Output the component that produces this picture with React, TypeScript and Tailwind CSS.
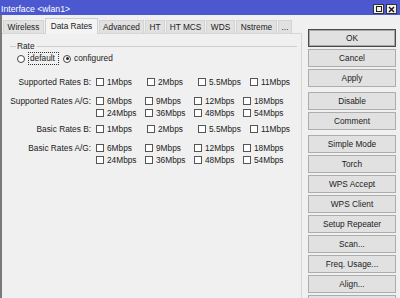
import React from "react";

const tabs = [
  { name: "Wireless", w: "w-[41px]" },
  { name: "Data Rates", w: "w-[53px]", active: true },
  { name: "Advanced", w: "w-[45px]" },
  { name: "HT", w: "w-[20px]" },
  { name: "HT MCS", w: "w-[39px]" },
  { name: "WDS", w: "w-[29px]" },
  { name: "Nstreme", w: "w-[41px]" },
  { name: "...", w: "w-[14px]" },
];

const rateB = ["1Mbps", "2Mbps", "5.5Mbps", "11Mbps"];
const rateAG = [
  ["6Mbps", "9Mbps", "12Mbps", "18Mbps"],
  ["24Mbps", "36Mbps", "48Mbps", "54Mbps"],
];

const buttonGroups = [
  ["OK", "Cancel", "Apply"],
  ["Disable", "Comment"],
  ["Simple Mode", "Torch", "WPS Accept", "WPS Client", "Setup Repeater", "Scan...", "Freq. Usage...", "Align...", ""],
];

function Check({ label }: { label: string }) {
  return (
    <div className="flex items-center h-[12px]">
      <span className="w-[8px] h-[8px] bg-white border border-[#555] shrink-0" />
      <span className="ml-[3px] whitespace-nowrap">{label}</span>
    </div>
  );
}

function Radio({ checked }: { checked?: boolean }) {
  return (
    <span className="w-[8px] h-[8px] rounded-full bg-white border border-[#444] flex items-center justify-center shrink-0">
      {checked && <span className="w-[3px] h-[3px] rounded-full bg-[#222]" />}
    </span>
  );
}

function RateB({ label, className }: { label: string; className: string }) {
  return (
    <div className={`flex ${className}`}>
      <div className="w-[89px] text-right h-[12px] leading-[12px] whitespace-nowrap">{label}</div>
      <div className="ml-[5px] grid grid-cols-[51px_51px_52px_auto]">
        {rateB.map((r) => (
          <Check key={r} label={r} />
        ))}
      </div>
    </div>
  );
}

function RateAG({ label, className }: { label: string; className: string }) {
  return (
    <div className={`flex ${className}`}>
      <div className="w-[89px] text-right h-[12px] leading-[12px] whitespace-nowrap">{label}</div>
      <div className="ml-[5px] flex flex-col">
        {rateAG.map((row, i) => (
          <div key={i} className="grid grid-cols-[49px_49px_49px_auto]">
            {row.map((r) => (
              <Check key={r} label={r} />
            ))}
          </div>
        ))}
      </div>
    </div>
  );
}

export default function App() {
  return (
    <div className="w-[400px] h-[298px] overflow-hidden bg-[#f0f0f0] flex flex-col font-['Liberation_Sans',Arial,sans-serif] text-[8.3px] text-[#1b1b1b]">
      {/* Title bar */}
      <div className="h-[15px] shrink-0 bg-[#4b58cf] flex items-end pb-[1px] pl-[1px] pr-[3px]">
        <span className="text-white text-[8.7px] leading-[10px]">Interface &lt;wlan1&gt;</span>
        <div className="ml-auto flex gap-[2px]">
          <span className="w-[11px] h-[10px] bg-[#f0f0f0] border border-[#333] flex items-center justify-center">
            <span className="w-[6px] h-[6px] border border-[#222]" />
          </span>
          <span className="w-[11px] h-[10px] bg-[#f0f0f0] border border-[#333] flex items-center justify-center">
            <svg width="7" height="7" viewBox="0 0 7 7">
              <path d="M1 1L6 6M6 1L1 6" stroke="#111" strokeWidth="1.4" />
            </svg>
          </span>
        </div>
      </div>

      <div className="flex flex-1 min-h-0">
        {/* Left: tabs + panel */}
        <div className="w-[302px] border-l-2 border-[#7a7a7a] flex flex-col pt-[3px]">
          <div className="flex items-end h-[15px] pl-[1px] gap-[1px]">
            {tabs.map((t) =>
              t.active ? (
                <div
                  key={t.name}
                  className={`${t.w} h-[16px] -mb-px z-10 bg-[#f4f4f4] border border-b-0 border-[#cfcfcf] flex items-center justify-center`}
                >
                  {t.name}
                </div>
              ) : (
                <div
                  key={t.name}
                  className={`${t.w} h-[13px] bg-[#e1e1e1] border border-b-0 border-[#d4d4d4] flex items-center justify-center text-[#222]`}
                >
                  {t.name}
                </div>
              )
            )}
          </div>

          <div className="flex-1 border-t border-r border-[#d6d6d6] flex flex-col">
            {/* Rate group */}
            <div className="mt-[7px] h-[10px] flex items-center pl-[8px] pr-[4px]">
              <span className="w-[6px] h-px bg-[#cdcdcd]" />
              <span className="ml-[1px] leading-[10px]">Rate</span>
              <span className="ml-[2px] flex-1 h-px bg-[#cdcdcd]" />
            </div>
            <div className="mt-[1px] h-[13px] flex items-center pl-[15px]">
              <Radio />
              <span className="ml-[3px] w-[31px] h-[13px] border border-dotted border-[#333] pl-[1px] leading-[11px]">default</span>
              <span className="ml-[4px]">
                <Radio checked />
              </span>
              <span className="ml-[3px]">configured</span>
            </div>

            <RateB label="Supported Rates B:" className="mt-[11px]" />
            <RateAG label="Supported Rates A/G:" className="mt-[7px]" />
            <RateB label="Basic Rates B:" className="mt-[4px]" />
            <RateAG label="Basic Rates A/G:" className="mt-[7px]" />
          </div>
        </div>

        {/* Right: buttons */}
        <div className="w-[88px] ml-[6px] pt-[14px] flex flex-col gap-[5px]">
          {buttonGroups.map((g, gi) => (
            <div key={gi} className="flex flex-col gap-[2px]">
              {g.map((b, bi) => (
                <div
                  key={bi}
                  className={`h-[18px] shrink-0 flex items-center justify-center bg-[#e1e1e1] border ${
                    b === "OK" ? "border-[#4a4a4a] shadow-[inset_0_0_0_1px_#a8a8a8]" : "border-[#adadad]"
                  }`}
                >
                  {b}
                </div>
              ))}
            </div>
          ))}
        </div>
      </div>
    </div>
  );
}
